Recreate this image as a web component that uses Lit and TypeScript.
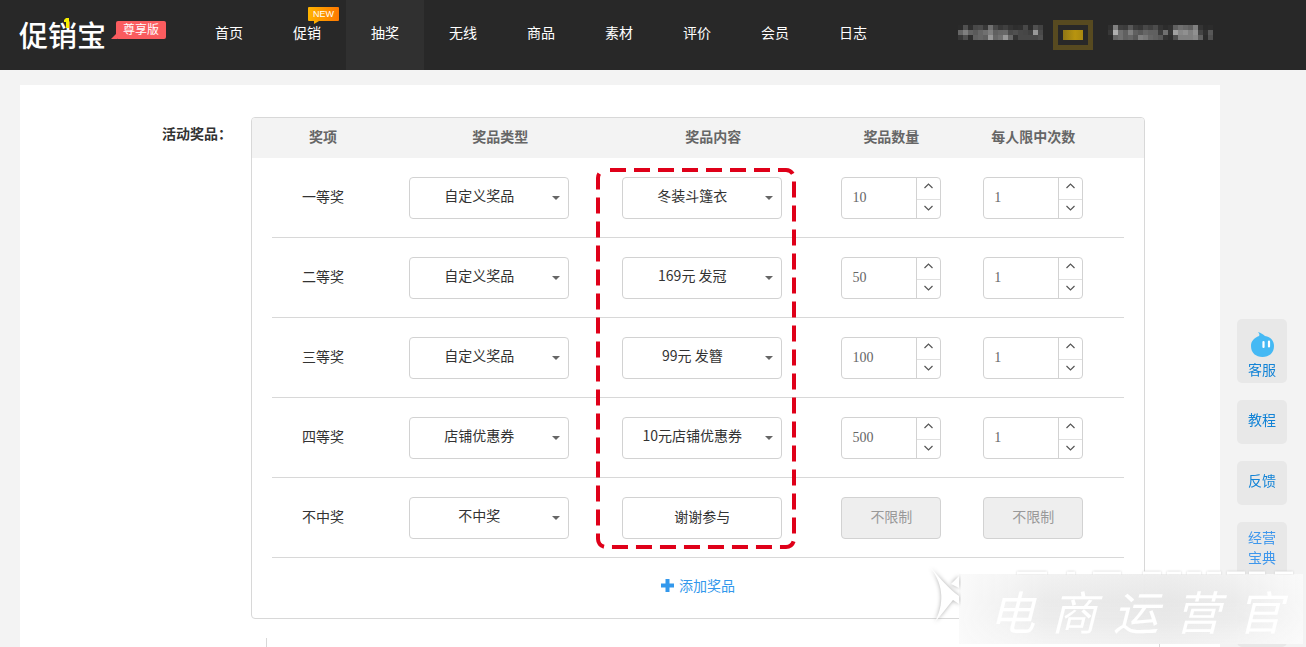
import { LitElement, html, css, svg } from "lit";
import { customElement, property } from "lit/decorators.js";
import { classMap } from "lit/directives/class-map.js";

interface Prize {
  level: string;
  type: string;
  content: string;
  amount?: number;
  limit?: number;
}

const PRIZES: Prize[] = [
  { level: "一等奖", type: "自定义奖品", content: "冬装斗篷衣", amount: 10, limit: 1 },
  { level: "二等奖", type: "自定义奖品", content: "169元 发冠", amount: 50, limit: 1 },
  { level: "三等奖", type: "自定义奖品", content: "99元 发簪", amount: 100, limit: 1 },
  { level: "四等奖", type: "店铺优惠券", content: "10元店铺优惠券", amount: 500, limit: 1 },
  { level: "不中奖", type: "不中奖", content: "谢谢参与" },
];

const NAV = ["首页", "促销", "抽奖", "无线", "商品", "素材", "评价", "会员", "日志"];

/* Grey levels of the masked account name and links, one number per cell. */
const ACCOUNT = [
  "2a 50 2e 48 4c 38 70 48 38 40 34 2e 30 48 2c 50 42",
  "66 80 62 5a 66 70 80 60 66 68 4a 50 48 46 40 98 4a",
  "38 50 2e 60 66 60 98 66 70 98 66 34 48 48 48 48 50",
];
const LINKS = [
  "30 80 40 3c 58 3c 36 48 40 4c 34 2c 30 60 70 68 60 80 34 2a 2c",
  "38 b0 70 60 80 60 58 66 60 60 3c 70 34 a0 88 90 80 90 44 30 58",
  "2a 66 70 60 66 58 80 78 66 60 58 34 2e 50 80 80 80 88 60 2c 50",
];

@customElement("number-box")
class NumberBox extends LitElement {
  @property({ type: Number }) value = 1;
  @property() label = "";

  static styles = css`
    :host {
      display: inline-flex;
      vertical-align: middle;
      box-sizing: border-box;
      width: 100px;
      height: 42px;
      border: 1px solid #d2d2d2;
      border-radius: 4px;
      background: #fff;
      overflow: hidden;
    }
    input {
      flex: 1;
      min-width: 0;
      border: 0;
      padding: 0 10px;
      outline: none;
      background: none;
      color: #666;
      font: 14px "Liberation Serif", serif;
      appearance: textfield;
    }
    input::-webkit-inner-spin-button {
      display: none;
    }
    .spin {
      display: flex;
      flex-direction: column;
      width: 23px;
      border-left: 1px solid #d2d2d2;
    }
    button {
      box-sizing: border-box;
      flex: 1;
      display: flex;
      align-items: center;
      justify-content: center;
      padding: 0 0 2px;
      border: 0;
      background: none;
      cursor: pointer;
    }
    button:first-child {
      flex: 0 0 21px;
      padding-bottom: 4px;
    }
    button + button {
      border-top: 1px solid #e0e0e0;
    }
    path {
      fill: none;
      stroke: #555;
      stroke-width: 1.2;
    }
  `;

  private step(by: number) {
    this.value = Math.max(0, this.value + by);
  }

  render() {
    return html`
      <input type="number" aria-label=${this.label} .value=${String(this.value)} />
      <span class="spin">
        <button aria-label="增加" @click=${() => this.step(1)}>
          <svg width="9" height="6"><path d="M.5 5L4.500 1L8.500 5" /></svg>
        </button>
        <button aria-label="减少" @click=${() => this.step(-1)}>
          <svg width="9" height="6"><path d="M.5 1L4.500 5L8.500 1" /></svg>
        </button>
      </span>
    `;
  }
}

@customElement("app-root")
class AppRoot extends LitElement {
  static styles = css`
    :host {
      display: block;
      min-height: 100vh;
      background: #f3f3f3;
      color: #333;
      font: 14px/20px "Noto Sans CJK SC", sans-serif;
    }
    * {
      box-sizing: border-box;
    }
    a {
      text-decoration: none;
    }
    header {
      display: flex;
      height: 70px;
      padding: 0 93px 0 19px;
      background: #282828;
      color: #fff;
    }
    .brand {
      display: flex;
      width: 171px;
      color: #fff;
    }
    .logo {
      position: relative;
      padding-top: 14px;
      font-size: 29px;
      line-height: 40px;
      font-weight: 500;
    }
    .spark {
      position: absolute;
      left: 45px;
      top: 18px;
    }
    .edition {
      position: relative;
      height: 18px;
      margin: 21px 0 0 10px;
      padding: 0 7px;
      border-radius: 2px;
      background: #fa5c5f;
      font-size: 12px;
      line-height: 15px;
    }
    .edition::before {
      content: "";
      position: absolute;
      left: -5px;
      bottom: 0;
      border: solid transparent;
      border-width: 0 0 6px 6px;
      border-bottom-color: #fa5c5f;
    }
    nav {
      display: flex;
    }
    .nav-item {
      position: relative;
      width: 78px;
      line-height: 64px;
      text-align: center;
      color: #fff;
    }
    .nav-item.active {
      background: #303030;
    }
    .new {
      position: absolute;
      left: 40px;
      top: 7px;
      width: 31px;
      height: 14px;
      border-radius: 1px;
      background: linear-gradient(90deg, #ffb400, #ff7800);
      font: 9px/14px "Liberation Sans", sans-serif;
    }
    .new::after {
      content: "";
      position: absolute;
      left: 6px;
      top: 14px;
      border: solid transparent;
      border-width: 3px 5px 0 0;
      border-top-color: #ffb000;
    }
    .account {
      display: flex;
      align-items: flex-start;
      margin-left: auto;
    }
    .account svg {
      display: block;
      margin-top: 25px;
    }
    .level {
      width: 40px;
      height: 30px;
      margin: 20px 15px 0 10px;
      padding: 5px;
      border: 5px solid #574a20;
    }
    .level::before {
      content: "";
      display: block;
      height: 10px;
      background: linear-gradient(90deg, #8f7616, #b8940f 60%, #a88810);
    }
    main {
      margin: 15px 86px 0 20px;
      padding: 32px 75px 0 0;
      background: #fff;
    }
    .field {
      display: grid;
      grid-template-columns: 212px 1fr;
      column-gap: 19px;
    }
    .field-label {
      padding-top: 6px;
      text-align: right;
      font-weight: 700;
    }
    .panel {
      border: 1px solid #d8d8d8;
      border-radius: 4px;
      padding: 0 20px;
      overflow: hidden;
    }
    table {
      width: 100%;
      table-layout: fixed;
      border-collapse: separate;
      border-spacing: 0;
      text-align: center;
    }
    th {
      height: 40px;
      background: #f3f3f3;
      color: #666;
      font-weight: 700;
    }
    th:first-child {
      box-shadow: -20px 0 #f3f3f3;
    }
    th:last-child {
      box-shadow: 20px 0 #f3f3f3;
    }
    td {
      position: relative;
      height: 80px;
      border-bottom: 1px solid #d8d8d8;
    }
    .c-level,
    .c-type,
    .c-content,
    .c-amount,
    .c-limit {
      padding: 0;
    }
    th[class] {
      padding-bottom: 4px;
    }
    .c-level {
      width: 12.7%;
      padding: 0 6px 4px 0;
    }
    .c-type {
      width: 28.2%;
    }
    .c-content {
      width: 21.8%;
    }
    .c-amount {
      width: 20%;
    }
    .c-limit {
      width: 17.3%;
      padding-right: 34px;
    }
    .box {
      width: 160px;
      height: 42px;
      margin: 0 22px 0 0;
      border: 1px solid #d2d2d2;
      border-radius: 4px;
      background: #fff;
      color: #333;
      font: inherit;
      text-align: center;
      vertical-align: middle;
      outline: none;
    }
    select.box {
      appearance: none;
      padding: 0 20px 6px 0;
      text-align-last: center;
      background: #fff
        url("data:image/svg+xml,%3Csvg xmlns='http://www.w3.org/2000/svg' width='8' height='4'%3E%3Cpath d='M0 0h8L4 4z' fill='%23666'/%3E%3C/svg%3E")
        no-repeat right 8px top 18px;
    }
    input.box {
      padding: 0 0 4px;
    }
    input.unlimited {
      width: 100px;
      margin: 0;
      background: #eee;
      color: #999;
    }
    .highlight {
      position: absolute;
      left: calc(50% - 117px);
      top: 10px;
      z-index: 1;
      pointer-events: none;
    }
    .add {
      display: flex;
      align-items: center;
      gap: 5px;
      height: 60px;
      margin: 0 auto;
      padding: 0 0 6px;
      border: 0;
      background: none;
      color: #3398ec;
      font: inherit;
      cursor: pointer;
    }
    .next {
      height: 9px;
      margin: 19px -15px 0 246px;
      border: solid #d8d8d8;
      border-width: 0 1px;
    }
    aside {
      position: fixed;
      right: 19px;
      top: 319px;
      display: flex;
      flex-direction: column;
      gap: 17px;
      width: 50px;
    }
    .side {
      display: flex;
      flex-direction: column;
      align-items: center;
      min-height: 44px;
      padding: 9px 10px 15px;
      border-radius: 5px;
      background: #e8e8e8;
      color: #1283d6;
      text-align: center;
    }
    .side.chat {
      padding: 13px 10px 4px;
    }
    .side.guide {
      padding: 5px 10px 19px;
      color: #3e97ec;
    }
    .mark {
      position: fixed;
      right: 3px;
      bottom: 3px;
      width: 344px;
      height: 70px;
      padding-left: 30px;
      display: flex;
      gap: 16px;
      background: linear-gradient(90deg, #fafafaf5, #ececec80 25%, #e4e4e480 60%, #ececec80 80%, #fafafae0),
        linear-gradient(#f8f8f8f0, #e9e9e9f0 40%, #ececece8 65%, #fdfdfdf5);
      color: #fff;
      font: italic 46px/72px "Noto Sans CJK SC", sans-serif;
    }
    .mark span {
      width: 46px;
    }
    .mark-logo {
      position: absolute;
      left: -32px;
      top: -10px;
    }
    .mark-top {
      position: absolute;
      left: 54px;
      top: -5px;
    }
  `;

  private mosaic(rows: string[]) {
    const cells = rows.map((row) => row.split(" "));
    return html`<svg width=${cells[0].length * 5} height="15" shape-rendering="crispEdges">
      ${cells.map((row, y) =>
        row.map((g, x) => svg`<rect x=${x * 5} y=${y * 5} width="5" height="5" fill=${"#" + g + g + g} />`)
      )}
    </svg>`;
  }

  private select(value: string, label: string) {
    return html`<select class="box" aria-label=${label}><option>${value}</option></select>`;
  }

  private quantity(value: number | undefined, label: string) {
    return value === undefined
      ? html`<input class="box unlimited" aria-label=${label} value="不限制" disabled />`
      : html`<number-box .value=${value} .label=${label}></number-box>`;
  }

  private row(prize: Prize, index: number) {
    return html`<tr>
      <td class="c-level">${prize.level}</td>
      <td class="c-type">${this.select(prize.type, prize.level + "奖品类型")}</td>
      <td class="c-content">
        ${prize.amount === undefined
          ? html`<input class="box" aria-label="奖品内容" .value=${prize.content} />`
          : this.select(prize.content, prize.level + "奖品内容")}
        ${index === 0
          ? html`<svg class="highlight" width="200" height="381">
              <rect x="2" y="2" width="196" height="377" rx="8" fill="none" stroke="#df0019"
                stroke-width="4" stroke-dasharray="16 8" stroke-dashoffset="-4" />
            </svg>`
          : ""}
      </td>
      <td class="c-amount">${this.quantity(prize.amount, prize.level + "奖品数量")}</td>
      <td class="c-limit">${this.quantity(prize.limit, prize.level + "每人限中次数")}</td>
    </tr>`;
  }

  render() {
    return html`
      <header>
        <a class="brand" href="#">
          <span class="logo">促销宝
            <svg class="spark" width="6" height="10"><path d="M0 2L2 0H5V10H2V4H0z" fill="#f6ee00" /></svg>
          </span>
          <span class="edition">尊享版</span>
        </a>
        <nav>
          ${NAV.map(
            (name) => html`<a href="#" class=${classMap({ "nav-item": true, active: name === "抽奖" })}
              >${name}${name === "促销" ? html`<span class="new">NEW</span>` : ""}</a>`
          )}
        </nav>
        <div class="account">
          ${this.mosaic(ACCOUNT)}<span class="level"></span>${this.mosaic(LINKS)}
        </div>
      </header>
      <main>
        <section class="field">
          <div class="field-label">活动奖品：</div>
          <div class="panel">
            <table>
              <thead>
                <tr>
                  <th class="c-level">奖项</th>
                  <th class="c-type">奖品类型</th>
                  <th class="c-content">奖品内容</th>
                  <th class="c-amount">奖品数量</th>
                  <th class="c-limit">每人限中次数</th>
                </tr>
              </thead>
              <tbody>${PRIZES.map((prize, i) => this.row(prize, i))}</tbody>
            </table>
            <button class="add">
              <svg width="13" height="13"><path d="M4.500 0h4v4.500H13v4H8.500V13h-4V8.500H0v-4h4.500z" fill="#3398ec" /></svg>
              添加奖品
            </button>
          </div>
        </section>
        <div class="next"></div>
      </main>
      <aside>
        <a class="side chat" href="#">
          <svg width="26" height="27" viewBox="0 0 26 27">
            <path d="M9 0C12 1 14 2 16 4C22 5 25 9 25 14C25 21 20 25 13.500 25C7 25 2 21 2 14C2 9 5 6 10 4C11 3 10 1 9 0z" fill="#45b9f4" />
            <path d="M14.500 10v5M20 9.500v5" stroke="#fff" stroke-width="2.200" stroke-linecap="round" />
          </svg>
          客服
        </a>
        <a class="side" href="#">教程</a>
        <a class="side" href="#">反馈</a>
        <a class="side guide" href="#">经营宝典</a>
        <div class="side"></div>
      </aside>
      <div class="mark">
        <svg class="mark-logo" width="34" height="62">
          <g fill="#fff" filter="drop-shadow(0 0 2px #aaa)">
            <path d="M4 4C13 14 21 24 32 32V40L26 36C21 42 15 50 8 58C17 40 17 22 4 4z" />
            <path d="M24 20L32 12V24z" />
          </g>
        </svg>
        <svg class="mark-top" width="286" height="6">
          <path d="M4 4h30M54 4h8M80 4h28M130 4h18M154 4h14M174 4h14M194 4h14M214 4h18M236 4h16M262 4h18" stroke="#fff"
            stroke-width="3" filter="drop-shadow(0 0 1px #ccc)" />
        </svg>
        <span>电</span><span>商</span><span>运</span><span>营</span><span>官</span>
      </div>
    `;
  }
}
